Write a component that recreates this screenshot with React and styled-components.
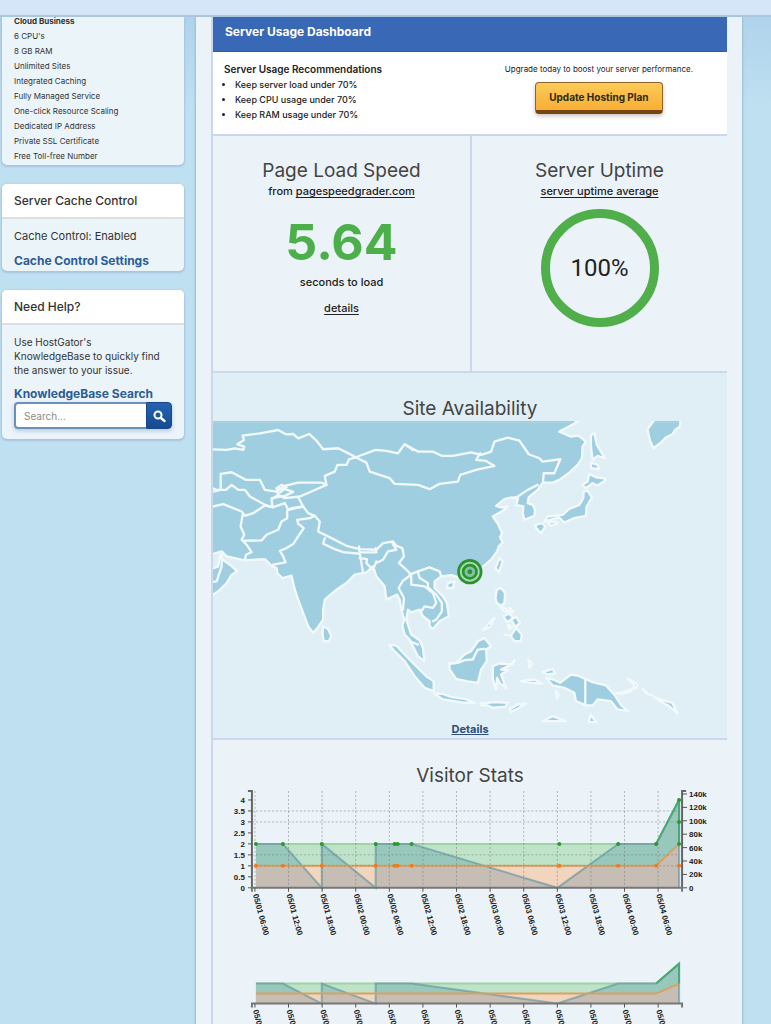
import React from "react";
import styled, { createGlobalStyle } from "styled-components";

/* ======================
   GLOBAL
====================== */

const GlobalStyle = createGlobalStyle`
  * {
    box-sizing: border-box;
  }

  body {
    margin: 0;
    font-family: Inter, "Open Sans", sans-serif;
    color: #333;
    background: #bfe0f1;
  }

  h1, h2, h3, p, ul {
    margin: 0;
    padding: 0;
    font-weight: 400;
  }
`;

/* ======================
   PAGE
====================== */

const Page = styled.div`
  display: flex;
  flex-direction: column;
  height: 100vh;
  overflow: hidden;
`;

const TopBar = styled.header`
  flex: none;
  height: 17px;
  background: #d4e6f7;
  border-bottom: 2px solid #adc8de;
`;

const Body = styled.div`
  flex: 1;
  display: flex;
  gap: 11px;
  min-height: 0;
  padding: 0 28px 0 2px;
  background: linear-gradient(#b0d3ec, #bfe0f1 90px);
`;

const Sidebar = styled.aside`
  flex: none;
  width: 182px;
  display: flex;
  flex-direction: column;
  gap: 19px;
`;

const Main = styled.main`
  flex: 1;
  min-width: 0;
  padding: 0 15px;
  background: #ebf3f9;
  border: solid #a5c5d9;
  border-width: 0 1px;
  box-shadow: 0 0 2px #9dbdd2;
`;

/* ======================
   SIDEBAR
====================== */

const Card = styled.section`
  background: #ebf4f9;
  border-radius: ${(p) => (p.$open ? "0 0 5px 5px" : "5px")};
  box-shadow: 0 1px 2px 1px #a9c2e0;
  overflow: hidden;
`;

const CardTitle = styled.h2`
  height: 35px;
  padding-left: 12px;
  font-size: 12px;
  font-weight: 500;
  line-height: 34px;
  background: #fff;
  border-bottom: 2px solid #dbe0e3;
`;

const CardBody = styled.div`
  padding: 8px 12px 0;
  font-size: 10px;
  line-height: 14px;
`;

const PlanList = styled.ul`
  padding: 0 12px 1px;
  list-style: none;
  font-size: 8px;
  line-height: 15px;

  li:first-child {
    margin-top: -3px;
    font-weight: 700;
  }
`;

const StatusLine = styled.p`
  font-size: 11px;
  line-height: 18px;
`;

const CardLink = styled.a`
  display: block;
  color: #2b5c98;
  font-size: 12px;
  font-weight: 700;
  line-height: 18px;
  padding: 7px 0 1px;
  text-decoration: none;
`;

const HelpText = styled.p`
  max-width: 160px;
  padding: 2px 0 8px;
`;

const SearchLabel = styled.label`
  display: block;
  color: #2b5c98;
  font-size: 12px;
  font-weight: 700;
  line-height: 17px;
`;

const SearchRow = styled.form`
  display: flex;
  width: 158px;
  height: 27px;
  margin-bottom: 10px;
  border-radius: 4px;
  box-shadow: 0 2px 4px #b9cadb;
`;

const SearchInput = styled.input`
  flex: 1;
  min-width: 0;
  padding: 0 8px;
  border: 2px solid #6b91b8;
  border-right: 0;
  border-radius: 4px 0 0 4px;
  font: 10px Inter, sans-serif;
  background: #fff;

  &::placeholder {
    color: #8b8b8b;
  }
`;

const SearchButton = styled.button`
  width: 26px;
  padding: 0;
  border: 1px solid #15478c;
  border-radius: 0 4px 4px 0;
  background: linear-gradient(#2563b0, #164a92);
  color: #fff;

  svg {
    display: block;
    margin: 0 auto;
  }
`;

/* ======================
   DASHBOARD
====================== */

const Dashboard = styled.div`
  border-left: 2px solid #cbd8ec;
`;

const DashboardHeader = styled.div`
  height: 35px;
  padding-left: 12px;
  background: #3868b6;
  border-bottom: 1px solid #2c5ca4;
`;

const DashboardTitle = styled.h1`
  color: #fff;
  font-size: 12px;
  font-weight: 700;
  line-height: 30px;
`;

const Recommendations = styled.section`
  display: flex;
  justify-content: space-between;
  height: 84px;
  padding: 9px 34px 0 11px;
  background: #fff;
  border-bottom: 2px solid #cbd8ec;
  color: #222;
`;

const RecTitle = styled.h2`
  font-size: 10px;
  font-weight: 600;
  line-height: 16px;
`;

const RecList = styled.ul`
  padding-left: 11px;
  font-size: 9px;
  font-weight: 500;
  line-height: 15px;
`;

const Upgrade = styled.div`
  display: flex;
  flex-direction: column;
  align-items: center;
  gap: 5px;
  font-size: 8px;
  font-weight: 500;
  line-height: 16px;
`;

const UpgradeButton = styled.button`
  width: 128px;
  height: 32px;
  padding: 0;
  border: 1px solid #8d6526;
  border-bottom: 4px solid #75470e;
  border-radius: 4px;
  background: linear-gradient(#fbcb58, #f9ae35);
  box-shadow: 0 2px 4px #c4c4c4;
  color: #2e2a12;
  font: 700 10px Inter, sans-serif;
`;

const Metrics = styled.div`
  display: grid;
  grid-template-columns: 259px 1fr;
  height: 237px;
  border-bottom: 2px solid #cbd8ec;
`;

const Metric = styled.section`
  display: flex;
  flex-direction: column;
  align-items: center;
  padding-top: 23px;
  border-right: ${(p) => (p.$divider ? "2px solid #cbd8ec" : "0")};
`;

const SectionTitle = styled.h2`
  color: #444;
  font-size: 19px;
  line-height: 24px;
  text-align: center;
`;

const Note = styled.p`
  color: #222;
  font-size: 11px;
  font-weight: 500;
  line-height: 16px;

  a {
    color: inherit;
    text-underline-offset: 2px;
  }
`;

const BigNumber = styled.p`
  margin: 13px 0 2px;
  color: #4caf4a;
  font-size: 50px;
  font-weight: 700;
  line-height: 60px;
`;

const DetailsNote = styled(Note)`
  margin-top: 10px;
`;

const Ring = styled.div`
  display: flex;
  align-items: center;
  justify-content: center;
  width: 118px;
  height: 118px;
  margin-top: 10px;
  border: 9px solid #50af4b;
  border-radius: 50%;
  color: #222;
  font: 24px Roboto, sans-serif;
`;

const Availability = styled.section`
  height: 367px;
  padding-top: 24px;
  background: #e0eef5;
  border-bottom: 2px solid #cbd8ec;

  svg {
    display: block;
    width: 100%;
  }
`;

const MapLink = styled.a`
  display: block;
  color: #2d4f7c;
  font-size: 11px;
  font-weight: 700;
  line-height: 13px;
  text-align: center;
`;

const Visitors = styled.section`
  padding-top: 24px;

  svg {
    display: block;
    width: 100%;
  }
`;

/* ======================
   MAP
====================== */

const LAND = [
  // Eurasia
  "0,93 1110,93 1050,125 1085,140 1108,137 1130,155 1120,170 1118,205 1105,225 1080,248 1050,270 1030,278 1000,278 985,300 958,322 955,340 970,345 977,360 975,378 945,390 940,370 942,350 920,345 926,326 905,323 885,328 860,348 875,353 895,350 885,360 850,380 865,402 878,430 872,442 880,458 868,470 863,485 845,510 810,540 780,547 745,562 725,556 695,560 675,575 675,595 700,620 712,640 718,680 690,695 670,718 660,710 660,695 640,680 630,660 605,668 595,660 590,690 605,735 630,752 640,775 645,815 625,800 610,770 600,750 585,735 578,708 584,690 575,660 570,630 562,615 530,630 525,590 500,560 490,530 470,548 435,555 410,580 380,600 345,630 340,660 340,690 325,712 310,730 295,710 280,670 265,630 255,600 245,558 218,565 203,552 200,535 185,528 165,508 105,512 50,500 35,485 0,495",
  // Arabia
  "0,620 25,605 50,580 65,555 82,545 60,525 38,510 30,497 25,530 0,540",
  // Sri Lanka
  "340,710 355,718 365,740 357,755 342,755 338,735",
  // Sumatra and Java
  "537,765 560,768 588,798 610,820 650,860 672,875 673,905 645,895 615,860 585,815 555,785",
  "673,912 700,913 725,922 765,928 795,940 765,940 735,935 700,930",
  // Borneo
  "720,822 740,820 765,795 785,785 805,755 825,745 845,770 830,780 832,815 815,840 805,880 770,875 740,868 720,840",
  // Sulawesi
  "850,830 870,822 910,825 915,812 900,828 875,840 895,842 875,855 890,895 870,880 863,865 860,900 850,870",
  // Philippines
  "862,600 875,595 887,610 885,640 875,648 862,640 858,625",
  "870,650 885,655 900,668 885,665", "882,680 900,672 912,685 893,698", "900,655 912,665 905,672",
  "905,690 920,682 932,700 918,712", "895,705 908,712 900,720",
  "885,735 905,738 920,715 937,735 935,755 915,755 903,738",
  "820,722 835,705 855,685 842,712",
  // Taiwan and Hainan
  "870,505 880,515 868,548 858,535", "715,580 735,575 730,595 712,595",
  // Japan
  "1123,305 1135,302 1148,323 1132,350 1130,378 1095,385 1065,398 1050,383 1005,395 1015,380 1060,375 1080,357 1110,345 1122,325",
  "1140,252 1160,262 1185,265 1188,272 1165,287 1150,280 1130,295 1120,285 1135,275",
  "978,405 998,400 1008,410 995,430 980,415", "1015,400 1035,395 1045,400 1023,408",
  // Sakhalin and Kamchatka
  "1145,135 1155,130 1163,165 1187,205 1165,198 1150,210 1145,170", "1145,218 1165,225 1170,238 1145,235",
  "1333,93 1415,93 1412,110 1398,120 1390,133 1370,143 1355,158 1333,175 1322,150 1315,118",
  // New Guinea
  "1010,865 1032,870 1052,880 1085,855 1105,858 1150,878 1190,888 1215,915 1238,950 1258,965 1225,960 1205,935 1165,930 1150,948 1130,948 1100,935 1095,910 1065,895 1030,888",
  "1000,848 1030,838 1037,852 1015,855", "1222,912 1240,908 1270,898 1275,892 1265,906 1235,914",
  "1255,868 1272,876 1285,886 1278,898 1272,882",
  "1300,898 1312,912 1330,918 1318,915", "1335,922 1370,935 1390,940 1405,972 1380,950 1350,934",
  // Small islands
  "812,943 835,940 855,938 895,940 888,952 850,955 835,948 815,948", "900,960 925,945 950,942 925,958 905,967",
  "935,875 975,870 998,882 970,880", "957,810 968,822 960,835", "1040,905 1048,915 1043,927",
  "1000,995 1030,980 1070,995", "1145,975 1160,998 1138,998",
];

const BORDERS = [
  "0,178 50,180 75,175 100,180 103,170 82,163 102,150 98,137 150,130 205,120 228,133 250,132 265,145 298,132 320,152 340,178 385,175 412,188 438,202 498,180 530,183 565,190 585,163 610,180",
  "438,202 418,208 410,225 383,225 375,245 345,258 350,285 335,278 265,278 225,288 200,305 165,300 150,270 108,270 65,247 32,252 32,300 10,305",
  "0,292 20,300 48,300 65,285 85,300 105,300 120,320 165,345 188,352 185,330 200,318",
  "0,352 40,343 95,365 105,378 130,370 165,347 188,352",
  "438,202 470,218 480,245 540,265 555,282 625,285 660,298 690,282 745,275 752,255 800,240 855,228 830,213 800,210 812,190",
  "585,163 625,185 670,185 698,198 730,198 785,187 815,195 845,185 855,155 895,143 930,152 958,193 990,205 1000,215 1053,208 1035,250 1003,250 1001,278",
  "350,285 305,305 270,320 225,325 205,315 200,295 225,298 250,306 225,318 185,325",
  "200,295 215,285 230,292 210,308",
  "265,322 280,350 235,360 225,340 190,352", "280,350 245,355 232,362 232,385 215,395 205,420 170,435 155,452 100,453",
  "280,350 295,370 315,378 300,385 262,390 265,402 282,415 268,435 250,463 230,475 210,483 220,500 227,518 190,525",
  "98,375 92,410 103,435 95,450 110,465 125,487 108,495 105,510",
  "315,378 330,395 325,425 365,445 410,468 450,478 500,480 520,460 550,455 560,468",
  "345,445 340,462 375,478 400,487 450,492", "448,470 450,490 460,548", "450,488 500,488 498,475",
  "450,505 472,508 470,520 490,540 500,515", "500,520 520,510 535,485 560,480 548,460",
  "560,468 578,475 583,500 568,520 590,540 605,555 580,573 567,595 583,625 580,660",
  "600,555 625,545 660,533 690,545 695,560", "605,560 605,585 645,590 670,610 680,640 670,655 645,650 635,665",
  "625,548 630,565 655,580 655,592 680,615 697,640 697,665 680,690 670,695",
  "720,822 745,820 765,812 790,810 805,780 825,778", "1128,868 1128,945", "910,325 925,320 955,300 985,285",
  "600,755 625,765", "0,578 20,575 35,530 35,490",
];

const AsiaMap = () => (
  <svg viewBox="9 93 1545 909" role="img" aria-label="Map of Asia">
    <g fill="#9ecee0" stroke="#f2f9fc" strokeWidth="7" strokeLinejoin="round">
      {LAND.map((points) => (
        <polygon key={points} points={points} />
      ))}
    </g>
    <path d="M9 93H1095" stroke="#9ecee0" strokeWidth="9" />
    <path d="M1336 93H1410" stroke="#9ecee0" strokeWidth="9" />
    <g fill="none" stroke="#f2f9fc" strokeWidth="7" strokeLinejoin="round" strokeLinecap="round">
      {BORDERS.map((points) => (
        <polyline key={points} points={points} />
      ))}
    </g>
    <g fill="none" stroke="#2a912f" strokeWidth="8">
      <circle cx="781" cy="546" r="34" fill="#a8d9b2" />
      <circle cx="781" cy="546" r="20" fill="#83c3a0" />
      <circle cx="781" cy="546" r="6" fill="#2a912f" strokeWidth="3" />
    </g>
  </svg>
);

/* ======================
   CHART
====================== */

const TIMES = [
  "01 06:00", "01 12:00", "01 18:00", "02 00:00", "02 06:00", "02 12:00", "02 18:00",
  "03 00:00", "03 06:00", "03 12:00", "03 18:00", "04 00:00", "04 06:00",
];
const LEFT_TICKS = [0, 0.5, 1, 1.5, 2, 2.5, 3, 3.5, 4];
const RIGHT_TICKS = ["0", "20k", "40k", "60k", "80k", "100k", "120k", "140k"];

const HITS = [[43, 2], [444, 2], [467, 4]];
const VISITS = [[43, 1], [444, 1], [467, 2]];
const BANDWIDTH = [
  [43, 2], [70, 2], [109, 0], [109, 2], [163, 0], [163, 2], [199, 2],
  [345, 0], [406, 2], [444, 2], [467, 4], [467, 0],
];
const MARKS = [43, 70, 109, 163, 182, 185, 199, 347, 406, 444, 467];

const tickX = (i) => 42 + (i * 404) / 12;

const Series = ({ id, base, unit }) => {
  const line = (data) => data.map(([x, v]) => `${x},${base - v * unit}`).join(" ");
  const area = (data) => `43,${base} ${line(data)} 467,${base}`;

  return (
    <g fill="none" strokeWidth="2">
      <clipPath id={id}>
        <polygon points={area(VISITS)} />
      </clipPath>
      <polygon points={area(HITS)} fill="#bfe3c8" />
      <polygon points={area(BANDWIDTH)} fill="#98c7bc" />
      <polygon points={area(VISITS)} fill="#f1d5be" />
      <polygon points={area(BANDWIDTH)} fill="#c6bdb4" clipPath={`url(#${id})`} />
      <polyline points={line(HITS)} stroke="#9ed3a3" />
      <polyline points={line(BANDWIDTH)} stroke="#5b8f9f" strokeOpacity="0.6" />
      <polyline points={line(VISITS)} stroke="#d9a15f" />
      <path d={`M444 ${base - 2 * unit}L467 ${base - 4 * unit}V${base - 2 * unit}`} stroke="#4aa978" />
    </g>
  );
};

const TimeAxis = ({ y }) => (
  <g>
    <path d={`M39 ${y + 4}V${y}H470V${y + 4}`} fill="none" stroke="#777" strokeWidth="2" />
    {TIMES.map((time, i) => (
      <g key={time}>
        <path d={`M${tickX(i)} ${y}v4`} stroke="#555" />
        <text transform={`translate(${tickX(i) - 2} ${y + 7}) rotate(75)`}>{`05/${time}`}</text>
      </g>
    ))}
  </g>
);

const VisitorChart = () => (
  <svg
    viewBox="0 0 515 236"
    fontFamily="Liberation Sans, sans-serif"
    fontSize="8"
    fontWeight="700"
    fill="#222"
    role="img"
    aria-label="Visitor stats"
  >
    <Series id="visits-main" base={100} unit={22} />
    <g stroke="#777" strokeOpacity="0.5" strokeDasharray="2 2">
      {TIMES.map((time, i) => (
        <path key={time} d={`M${tickX(i)} 3V100`} />
      ))}
      {[23, 34, 67, 78].map((y) => (
        <path key={y} d={`M39 ${y}H467`} />
      ))}
    </g>
    {MARKS.map((x) => (
      <g key={x}>
        <circle cx={x} cy="56" r="2" fill="#259b2a" />
        <circle cx={x} cy="78" r="2" fill="#f07b1c" />
      </g>
    ))}
    <circle cx="467" cy="12" r="2" fill="#259b2a" />
    <circle cx="467" cy="34" r="2" fill="#259b2a" />
    <path d="M35 3H39V100M474 3H470V100" fill="none" stroke="#666" strokeWidth="2" />
    {LEFT_TICKS.map((v) => (
      <g key={v}>
        <path d={`M35 ${100 - v * 22}h4`} stroke="#555" />
        <text x="32" y={103 - v * 22} textAnchor="end">{v}</text>
      </g>
    ))}
    {RIGHT_TICKS.map((label, i) => (
      <g key={label}>
        <path d={`M470 ${100 - (i * 94) / 7}h5`} stroke="#555" />
        <text x="477" y={103 - (i * 94) / 7}>{label}</text>
      </g>
    ))}
    <TimeAxis y={100} />
    <Series id="visits-mini" base={216} unit={10} />
    <TimeAxis y={216} />
  </svg>
);

/* ======================
   APP
====================== */

const App = () => {
  return (
    <>
      <GlobalStyle />
      <Page>
        <TopBar />
        <Body>
          <Sidebar>
            <Card $open>
              <PlanList>
                <li>Cloud Business</li>
                <li>6 CPU's</li>
                <li>8 GB RAM</li>
                <li>Unlimited Sites</li>
                <li>Integrated Caching</li>
                <li>Fully Managed Service</li>
                <li>One-click Resource Scaling</li>
                <li>Dedicated IP Address</li>
                <li>Private SSL Certificate</li>
                <li>Free Toll-free Number</li>
              </PlanList>
            </Card>

            <Card>
              <CardTitle>Server Cache Control</CardTitle>
              <CardBody>
                <StatusLine>Cache Control: Enabled</StatusLine>
                <CardLink href="#cache">Cache Control Settings</CardLink>
              </CardBody>
            </Card>

            <Card>
              <CardTitle>Need Help?</CardTitle>
              <CardBody>
                <HelpText>
                  Use HostGator's
                  <br />
                  KnowledgeBase to quickly find the answer to your issue.
                </HelpText>
                <SearchLabel htmlFor="kb">KnowledgeBase Search</SearchLabel>
                <SearchRow>
                  <SearchInput id="kb" placeholder="Search..." />
                  <SearchButton type="button" aria-label="Search">
                    <svg width="14" height="14" viewBox="0 0 14 14" fill="none" stroke="currentColor">
                      <circle cx="6" cy="6" r="3.5" strokeWidth="2" />
                      <path d="M9 9l3.5 3" strokeWidth="2.4" strokeLinecap="round" />
                    </svg>
                  </SearchButton>
                </SearchRow>
              </CardBody>
            </Card>
          </Sidebar>

          <Main>
            <Dashboard>
              <DashboardHeader>
                <DashboardTitle>Server Usage Dashboard</DashboardTitle>
              </DashboardHeader>

              <Recommendations>
                <div>
                  <RecTitle>Server Usage Recommendations</RecTitle>
                  <RecList>
                    <li>Keep server load under 70%</li>
                    <li>Keep CPU usage under 70%</li>
                    <li>Keep RAM usage under 70%</li>
                  </RecList>
                </div>
                <Upgrade>
                  <p>Upgrade today to boost your server performance.</p>
                  <UpgradeButton type="button">Update Hosting Plan</UpgradeButton>
                </Upgrade>
              </Recommendations>

              <Metrics>
                <Metric $divider>
                  <SectionTitle>Page Load Speed</SectionTitle>
                  <Note>
                    from <a href="#grader">pagespeedgrader.com</a>
                  </Note>
                  <BigNumber>5.64</BigNumber>
                  <Note>seconds to load</Note>
                  <DetailsNote>
                    <a href="#speed">details</a>
                  </DetailsNote>
                </Metric>
                <Metric>
                  <SectionTitle>Server Uptime</SectionTitle>
                  <Note>
                    <a href="#uptime">server uptime average</a>
                  </Note>
                  <Ring>100%</Ring>
                </Metric>
              </Metrics>

              <Availability>
                <SectionTitle>Site Availability</SectionTitle>
                <AsiaMap />
                <MapLink href="#availability">Details</MapLink>
              </Availability>

              <Visitors>
                <SectionTitle>Visitor Stats</SectionTitle>
                <VisitorChart />
              </Visitors>
            </Dashboard>
          </Main>
        </Body>
      </Page>
    </>
  );
};

export default App;
